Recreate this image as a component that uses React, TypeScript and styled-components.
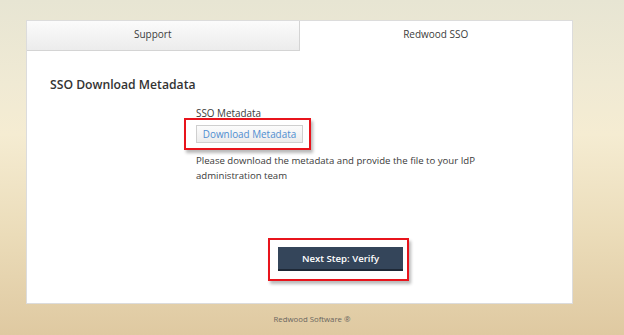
import React from "react";
import styled, { createGlobalStyle } from "styled-components";

const GlobalStyle = createGlobalStyle`
  html, body {
    margin: 0;
    padding: 0;
    height: 100%;
  }
  body {
    min-height: 335px;
    background: linear-gradient(
      to bottom,
      #e7e5d3 0%,
      #f0ead4 25%,
      #f5ecd2 40%,
      #ebdcb9 70%,
      #dfc9a1 100%
    );
    font-family: "Open Sans", "Noto Sans", sans-serif;
    color: #444;
  }
  #root {
    min-height: 335px;
  }
`;

const Page = styled.div`
  display: flex;
  flex-direction: column;
  padding: 20px 0 0 26px;
`;

const Panel = styled.section`
  width: 547px;
  box-sizing: border-box;
  background: #fff;
  border: 1px solid #dcdcdc;
  display: flex;
  flex-direction: column;
`;

const TabBar = styled.div`
  display: flex;
  height: 30px;
`;

const Tab = styled.div<{ $active?: boolean; $shift?: number }>`
  flex: 0 0 50%;
  display: flex;
  align-items: center;
  justify-content: center;
  box-sizing: border-box;
  padding-right: ${(p) => p.$shift ?? 0}px;
  padding-bottom: 4px;
  font-size: 10px;
  color: #3c3c3c;
  background: ${(p) =>
    p.$active ? "#fff" : "linear-gradient(to bottom, #fbfbfb 0%, #ececec 100%)"};
  border-bottom: ${(p) => (p.$active ? "1px solid transparent" : "1px solid #d4d4d4")};
  border-right: ${(p) => (p.$active ? "none" : "1px solid #d4d4d4")};
`;

const Content = styled.div`
  padding: 26px 0 32px 23px;
  display: flex;
  flex-direction: column;
`;

const Heading = styled.h2`
  margin: 0;
  font-size: 12.2px;
  line-height: 16px;
  font-weight: 600;
  color: #333;
`;

const FormColumn = styled.div`
  margin: 13px 0 0 146px;
  width: 289px;
  display: flex;
  flex-direction: column;
  align-items: flex-start;
`;

const Label = styled.div`
  font-size: 9.9px;
  line-height: 14px;
  color: #3a3a3a;
`;

const Highlight = styled.div<{ $l: number; $r: number; $t: number; $b: number }>`
  position: relative;
  display: inline-flex;
  &::after {
    content: "";
    position: absolute;
    left: -${(p) => p.$l}px;
    right: -${(p) => p.$r}px;
    top: -${(p) => p.$t}px;
    bottom: -${(p) => p.$b}px;
    border: 2px solid #e8141c;
    box-shadow: 2px 3px 3px rgba(0, 0, 0, 0.28);
    pointer-events: none;
  }
`;

const LightButton = styled.button`
  height: 18px;
  width: 107px;
  box-sizing: border-box;
  padding: 0;
  border: 1px solid #cfcfcf;
  background: linear-gradient(to bottom, #fcfcfc 0%, #ececec 100%);
  font-family: "Open Sans", "Noto Sans", sans-serif;
  font-size: 9.9px;
  color: #4f8dd0;
  cursor: pointer;
`;

const Help = styled.p`
  margin: 10px 0 0;
  font-size: 9.6px;
  line-height: 15px;
  color: #3a3a3a;
`;

const ActionRow = styled.div`
  margin-top: 64px;
  align-self: stretch;
  display: flex;
  justify-content: center;
`;

const PrimaryButton = styled.button`
  width: 125px;
  height: 24px;
  box-sizing: border-box;
  padding: 0;
  border: none;
  border-bottom: 2px solid #1e2836;
  background: #34455a;
  color: #fff;
  font-family: "Open Sans", "Noto Sans", sans-serif;
  font-size: 9.6px;
  font-weight: 600;
  cursor: pointer;
`;

const Footer = styled.footer`
  width: 624px;
  margin-left: -26px;
  padding-top: 10px;
  text-align: center;
  font-size: 7.8px;
  line-height: 10px;
  color: #6a6660;
`;

export default function App() {
  return (
    <>
      <GlobalStyle />
      <Page>
        <Panel>
          <TabBar>
            <Tab $shift={20}>Support</Tab>
            <Tab $active>Redwood SSO</Tab>
          </TabBar>
          <Content>
            <Heading>SSO Download Metadata</Heading>
            <FormColumn>
              <Label>SSO Metadata</Label>
              <Highlight $l={12} $r={8} $t={7} $b={7} style={{ marginTop: 5 }}>
                <LightButton>Download Metadata</LightButton>
              </Highlight>
              <Help>
                Please download the metadata and provide the file to your IdP administration team
              </Help>
              <ActionRow>
                <Highlight $l={10} $r={6} $t={9} $b={10}>
                  <PrimaryButton>Next Step: Verify</PrimaryButton>
                </Highlight>
              </ActionRow>
            </FormColumn>
          </Content>
        </Panel>
        <Footer>Redwood Software ®</Footer>
      </Page>
    </>
  );
}
